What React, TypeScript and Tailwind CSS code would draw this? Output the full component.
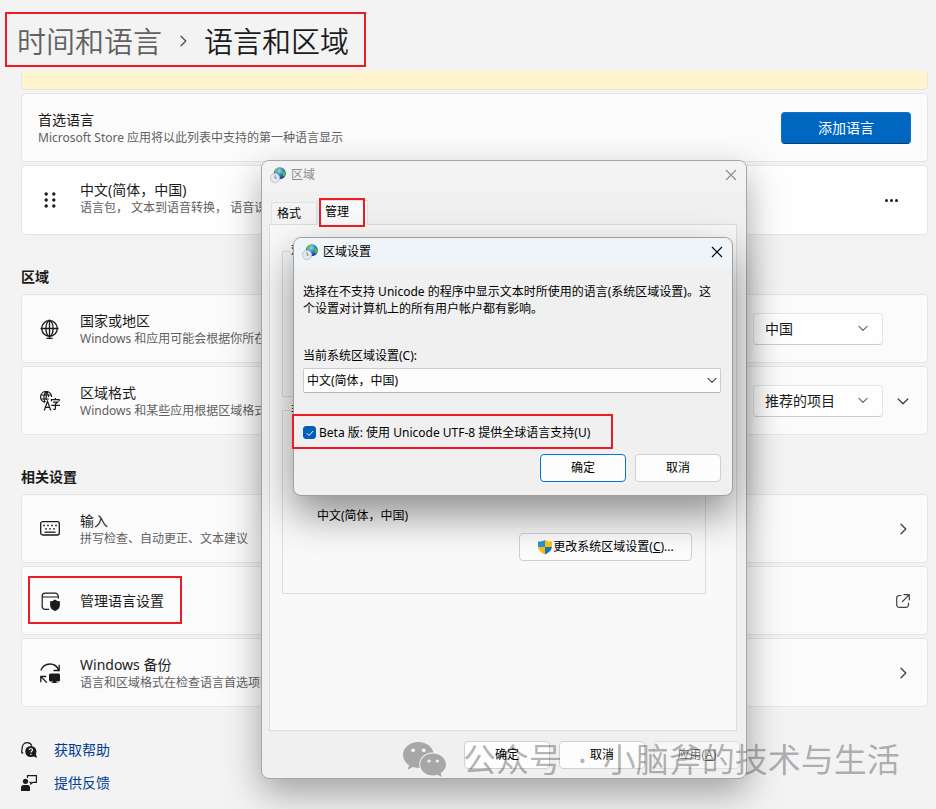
import React, { useState } from 'react';
import { FaWeixin } from 'react-icons/fa';

interface SettingCardProps {
  icon?: React.ReactNode;
  title: string;
  description?: string;
  tall?: boolean;
  highlighted?: boolean;
  children?: React.ReactNode;
}

const SettingCard: React.FC<SettingCardProps> = ({ icon, title, description, tall, highlighted, children }) => (
  <div
    className={`relative flex items-center rounded-[4px] border border-[#e5e5e5] px-4 ${
      tall ? 'h-[70px] bg-[#fefefe]' : 'h-[69px] bg-[#fbfbfb]'
    }`}
  >
    {icon && <div className="mr-[18px] flex w-6 shrink-0 justify-center text-[#1b1b1b]">{icon}</div>}
    <div className={`min-w-0 flex-1 whitespace-nowrap ${tall ? 'pb-1' : ''}`}>
      <div className="text-sm leading-5 text-[#1b1b1b]">{title}</div>
      {description && <div className="text-xs leading-4 text-[#616161]">{description}</div>}
    </div>
    {children}
    {highlighted && <div className="absolute top-[9px] left-[6px] h-12 w-[154px] border-2 border-[#ed1c24]" />}
  </div>
);

const SectionTitle = ({ children }: { children: React.ReactNode }) => (
  <h2 className="pt-8 pb-[7px] text-sm leading-5 font-semibold text-[#1b1b1b]">{children}</h2>
);

const Chevron = ({ direction, className }: { direction: 'right' | 'down'; className: string }) => (
  <svg viewBox="0 0 12 12" className={className} fill="none" stroke="currentColor" strokeWidth="1.300" strokeLinecap="round" strokeLinejoin="round">
    <path d={direction === 'right' ? 'M4 1.2 8.8 6 4 10.8' : 'M1.2 4 6 8.8 10.8 4'} />
  </svg>
);

const SettingSelect = ({ label, value }: { label: string; value: string }) => (
  <div className="relative">
    <select
      aria-label={label}
      className="h-8 w-[130px] appearance-none rounded-[4px] border border-[#e5e5e5] border-b-[#cccccc] bg-[#fefefe] pl-[11px] text-sm text-[#1b1b1b]"
    >
      <option>{value}</option>
    </select>
    <Chevron direction="down" className="pointer-events-none absolute top-[10px] right-[15px] size-[10px] text-[#606060]" />
  </div>
);

const DragIcon = () => (
  <svg viewBox="0 0 20 20" className="size-5" fill="currentColor">
    {[4, 10, 16].map((y) => (
      <React.Fragment key={y}>
        <circle cx="6.2" cy={y} r="1.7" />
        <circle cx="13.8" cy={y} r="1.7" />
      </React.Fragment>
    ))}
  </svg>
);

const GlobeIcon = () => (
  <svg viewBox="0 0 20 20" className="size-5" fill="none" stroke="currentColor" strokeWidth="1.3">
    <circle cx="9.5" cy="9.500" r="7.800" />
    <ellipse cx="9.5" cy="9.500" rx="3.6" ry="7.800" />
    <path d="M.5 9.500h18M9.5 .5v19M6.5 19.300h6" />
  </svg>
);

const RegionFormatIcon = () => (
  <svg viewBox="0 0 20 20" className="size-5" fill="none" stroke="currentColor" strokeWidth="1.2">
    <path d="M5 11.300A5.500 5.500 0 1 1 11.600 6M6.200.6C4.600 1.800 3.900 3.600 3.900 6s.5 3.800 1.400 5M6.200.6c1.600 1.200 2.400 3 2.400 5.400M1.200 4h10M1.200 8h7.600M6.200.6v8.400" />
    <path d="m4.200 19.500 3.300-9.200 3.300 9.200M5.300 16.400h4.400" />
    <path d="M11.400 10.200V8.600h7.800v1.600M15.300 7v1.500M13 11.200h4.600l-2.200 1.900v4.300c0 .8-.4 1-1 1h-1.200M11.300 14.400h8.600" />
  </svg>
);

const KeyboardIcon = () => (
  <svg viewBox="0 0 20 20" className="size-5" fill="none" stroke="currentColor" strokeWidth="1.3">
    <rect x=".7" y="2.600" width="18.600" height="13.400" rx="2" />
    <path d="M4.500 13.200h11" />
    <g fill="currentColor" stroke="none">
      <circle cx="4" cy="6.400" r=".9" />
      <circle cx="8" cy="6.400" r=".9" />
      <circle cx="12" cy="6.400" r=".9" />
      <circle cx="16" cy="6.400" r=".9" />
      <circle cx="6" cy="9.800" r=".9" />
      <circle cx="10" cy="9.800" r=".9" />
      <circle cx="14" cy="9.800" r=".9" />
    </g>
  </svg>
);

const WindowShieldIcon = () => (
  <svg viewBox="0 0 20 20" className="size-5" fill="none" stroke="currentColor" strokeWidth="1.200">
    <path d="M9 18.400H5.200a3 3 0 0 1-3-3V5.200a3 3 0 0 1 3-3h10.100a3 3 0 0 1 3 3V7.500M2.200 6h16.100" />
    <path
      d="M15 8.400c1.500 1.300 3.100 1.800 4.900 1.900v3.600c0 3-1.800 4.900-4.900 6.100-3.100-1.200-4.900-3.100-4.900-6.100v-3.600c1.800-.1 3.400-.6 4.900-1.900Z"
      fill="currentColor"
      stroke="none"
    />
  </svg>
);

const BackupIcon = () => (
  <svg viewBox="0 0 20 20" className="size-5" fill="none" stroke="currentColor" strokeWidth="1.300">
    <path d="M.8 7.500C2.500 3.200 6 1 10 1c3.700 0 7 2 8.700 6M19.200 1.800v5.700h-5.700M.8 19.200v-5.700h5.400M.9 13.600l6 6" />
    <path d="M10.500 10.500h8a1.500 1.500 0 0 1 1.500 1.500v5a1.500 1.500 0 0 1-1.500 1.500H16v.7h1.500v.8h-6v-.8H13v-.7h-2.500A1.500 1.500 0 0 1 9 17v-5a1.500 1.500 0 0 1 1.500-1.500Z" fill="currentColor" stroke="none" />
  </svg>
);

const OpenIcon = () => (
  <svg viewBox="0 0 16 16" className="size-4 text-[#404040]" fill="none" stroke="currentColor" strokeWidth="1.200" strokeLinecap="round" strokeLinejoin="round">
    <path d="M6 2.500H4.200a2.500 2.500 0 0 0-2.500 2.500v6.800a2.500 2.500 0 0 0 2.500 2.500H11a2.500 2.500 0 0 0 2.500-2.500V10M9 1.700h5.300V7M14.100 1.900 7.500 8.500" />
  </svg>
);

const HelpIcon = () => (
  <svg viewBox="0 0 16 16" className="size-4" fill="none" stroke="currentColor">
    <path d="M1.200 7.500C.8 3.200 2.800.7 6 .7c2.400 0 4 1 4.800 3M.8 7.500v3.300h1.500" strokeWidth="1.200" />
    <circle cx="9.800" cy="9.500" r="5.600" fill="currentColor" stroke="none" />
    <path d="m12 14 4 2-1.200-4.500Z" fill="currentColor" stroke="none" />
    <path d="M8.300 8c0-2 3.200-2 3.200 0 0 1.200-1.600 1.200-1.600 2.500M9.900 11.700v1.200" stroke="#f3f3f3" strokeWidth="1.200" />
  </svg>
);

const FeedbackIcon = () => (
  <svg viewBox="0 0 16 16" className="size-4" fill="currentColor">
    <circle cx="4.500" cy="6.300" r="2.600" />
    <path d="M0 16v-3.200C0 11 1 10 2.600 10h4C8.200 10 9 11 9 12.800V16Z" />
    <path d="M6.500 3V.6h8.900v6.700h-3.600L9.900 9V7.300h-1.400" fill="none" stroke="currentColor" strokeWidth="1.200" />
  </svg>
);

const GlobeClockIcon = () => (
  <svg viewBox="0 0 16 16" className="size-4">
    <defs>
      <radialGradient id="globe" cx="0.45" cy="0.3" r="0.75">
        <stop offset="0" stopColor="#9bdcf7" />
        <stop offset="0.45" stopColor="#2f7fd6" />
        <stop offset="1" stopColor="#10277e" />
      </radialGradient>
    </defs>
    <circle cx="9.800" cy="6.200" r="6" fill="url(#globe)" />
    <path d="M5 3.500C6 1.500 8 .6 9.600.8 9.400 2 8 2 8.400 3.400 7.400 4 7.400 5.500 5.800 6 4.800 5.600 4.500 4.500 5 3.500Z" fill="#62c455" />
    <path d="M11.800 4.600c1.500-.8 2.700-.2 3.500.4.500 1.600 0 3.300-1 4.600-1.500.2-1.400-1.500-2-2.400s-1.300-1.700-.5-2.600Z" fill="#4db848" />
    <circle cx="5" cy="11" r="4.700" fill="#e3e9ee" stroke="#aab4bc" strokeWidth=".7" />
    <path d="M5 8v3.200l2-.4" fill="none" stroke="#6d7880" strokeWidth=".8" />
  </svg>
);

const ShieldIcon = () => (
  <svg viewBox="0 0 16 16" className="size-4">
    <path d="M8 1C6 2.200 3.500 2.700 1 2.700V8h7Z" fill="#2196d8" />
    <path d="M8 1c2 1.200 4.500 1.700 7 1.700V8H8Z" fill="#fdc60b" />
    <path d="M1 8c.3 3.200 3 5.700 7 7.400V8Z" fill="#fdb913" />
    <path d="M15 8c-.3 3.200-3 5.700-7 7.400V8Z" fill="#1973be" />
  </svg>
);

const CloseIcon = () => (
  <svg viewBox="0 0 12 12" className="size-3" fill="none" stroke="currentColor" strokeWidth="1.100">
    <path d="m1 1 10 10M11 1 1 11" />
  </svg>
);

const DialogButton = ({ primary, disabled, children }: { primary?: boolean; disabled?: boolean; children: React.ReactNode }) => (
  <button
    disabled={disabled}
    className={`h-7 w-[86px] rounded-[4px] border bg-[#fdfdfd] ${
      primary ? 'border-[#0078d4]' : 'border-[#d0d0d0]'
    } ${disabled ? 'opacity-50' : ''}`}
  >
    {children}
  </button>
);

const RegionWindow = () => (
  <section className="absolute top-[160px] left-[261px] w-[486px] overflow-hidden rounded-lg border border-[#a6a6a6] bg-[#f0f0f0] text-xs text-black shadow-[0_14px_36px_rgba(0,0,0,0.34)]">
    <div className="flex h-[30px] items-center bg-[#f3f3f3] pr-[9px] pb-[2px] pl-2 text-[#8b8b8b]">
      <GlobeClockIcon />
      <span className="ml-[5px] flex-1">区域</span>
      <button aria-label="关闭"><CloseIcon /></button>
    </div>
    <div className="pt-[9px] pr-[9px] pl-[7px]">
      <div className="flex items-end pl-[2px]" role="tablist">
        <button role="tab" className="h-[22px] w-[46px] border border-b-0 border-[#e2e2e2] bg-[#f3f3f3] pr-[10px]">格式</button>
        <button role="tab" className="relative -mb-px h-[25px] w-[51px] border border-b-0 border-[#e2e2e2] bg-[#f9f9f9] pr-[11px] pb-[2px] text-center">
          管理
          <span className="absolute -top-[3px] left-px h-[29px] w-[46px] border-2 border-[#ed1c24]" />
        </button>
      </div>
      <div className="h-[507px] border border-[#dcdcdc] bg-[#f9f9f9] pt-[18px] pr-[30px] pl-3">
        <fieldset className="h-[154px] border border-[#dcdcdc] pl-[7px]">
          <legend className="px-px leading-4">欢</legend>
        </fieldset>
        <fieldset className="mt-[5px] h-[192px] border border-[#dcdcdc] pr-[13px] pl-[7px]">
          <legend className="px-px leading-4">非</legend>
          <p className="mt-[90px] pl-[27px] leading-4">中文(简体，中国)</p>
          <div className="mt-[9px] flex justify-end">
            <button className="flex h-7 w-[173px] items-center justify-center whitespace-nowrap rounded-[4px] border border-[#d0d0d0] bg-[#fdfdfd]">
              <ShieldIcon />
              <span>更改系统区域设置(<u>C</u>)...</span>
            </button>
          </div>
        </fieldset>
      </div>
    </div>
    <div className="flex justify-end gap-[9px] pt-[10px] pr-[6px] pb-[9px]">
      <DialogButton>确定</DialogButton>
      <DialogButton>取消</DialogButton>
      <DialogButton disabled>应用(<u>A</u>)</DialogButton>
    </div>
  </section>
);

const RegionSettingsDialog = () => {
  const [utf8, setUtf8] = useState(true);

  return (
    <section className="absolute top-[237px] left-[293px] w-[440px] rounded-lg border border-[#a0a0a0] bg-[#f0f0f0] text-xs text-black shadow-[0_18px_40px_rgba(0,0,0,0.44)]">
      <div className="flex h-[29px] items-center rounded-t-lg bg-[#eff4f9] pr-[9px] pb-[2px] pl-2">
        <GlobeClockIcon />
        <span className="ml-[5px] flex-1">区域设置</span>
        <button aria-label="关闭"><CloseIcon /></button>
      </div>
      <div className="pt-4 pr-[11px] pb-[13px] pl-[9px]">
        <p className="leading-[17px] whitespace-nowrap">
          选择在不支持 Unicode 的程序中显示文本时所使用的语言(系统区域设置)。这
          <br />
          个设置对计算机上的所有用户帐户都有影响。
        </p>
        <label htmlFor="locale" className="mt-[31px] block leading-4">当前系统区域设置(C):</label>
        <div className="relative mt-1">
          <select id="locale" className="block h-[25px] w-full appearance-none rounded-[2px] border border-[#cccccc] border-b-[#b5b5b5] bg-[#fdfdfd] pl-[3px]">
            <option>中文(简体，中国)</option>
          </select>
          <Chevron direction="down" className="pointer-events-none absolute top-[7px] right-1 size-[10px] text-[#404040]" />
        </div>
        <label className="mt-[21px] -ml-[11px] flex h-[35px] w-[321px] items-center border-2 border-[#ed1c24] pt-[2px] pl-[9px] whitespace-nowrap">
          <input type="checkbox" checked={utf8} onChange={(e) => setUtf8(e.target.checked)} className="peer sr-only" />
          <span className="mr-[3px] flex size-[13px] items-center justify-center rounded-[3px] border border-[#868686] bg-white text-white peer-checked:border-[#005fb8] peer-checked:bg-[#005fb8]">
            <svg viewBox="0 0 12 12" className="size-[10px]" fill="none" stroke="currentColor" strokeWidth="1.200">
              <path d="m2 6.200 2.800 2.800L10 3.500" />
            </svg>
          </span>
          Beta 版: 使用 Unicode UTF-8 提供全球语言支持(U)
        </label>
        <div className="mt-[5px] flex justify-end gap-[9px]">
          <DialogButton primary>确定</DialogButton>
          <DialogButton>取消</DialogButton>
        </div>
      </div>
    </section>
  );
};

const App: React.FC = () => {
  return (
    <div className="relative min-h-screen overflow-hidden bg-[#f3f3f3] font-['Noto_Sans','Noto_Sans_CJK_SC',sans-serif]">
      <header className="pt-3 pb-1 pl-[5px]">
        <h1 className="flex h-[55px] w-[361px] items-center border-2 border-[#ed1c24] pt-[3px] pl-[10px] text-[29px] leading-none font-[350] whitespace-nowrap text-[#1b1b1b]">
          <span className="text-[#616161]">时间和语言</span>
          <Chevron direction="right" className="mx-[15px] size-3 text-[#505050]" />
          <span>语言和区域</span>
        </h1>
      </header>

      <main className="pr-2 pl-[21px]">
        <div className="h-[19px] rounded-b-[4px] border border-t-0 border-[#e5e5e5] bg-[#fff4ce]" />
        <div className="mt-[3px] flex flex-col gap-[3px]">
          <SettingCard title="首选语言" description="Microsoft Store 应用将以此列表中支持的第一种语言显示">
            <button className="h-8 w-[130px] rounded-[4px] border border-[#1470c6] border-b-[#003e73] bg-[#0067c0] text-sm text-white">
              添加语言
            </button>
          </SettingCard>
          <SettingCard tall icon={<DragIcon />} title="中文(简体，中国)" description="语言包， 文本到语音转换， 语音识别">
            <button aria-label="更多选项" className="flex h-8 w-10 items-center justify-center gap-[2px]">
              <span className="size-[3px] rounded-full bg-[#1b1b1b]" />
              <span className="size-[3px] rounded-full bg-[#1b1b1b]" />
              <span className="size-[3px] rounded-full bg-[#1b1b1b]" />
            </button>
          </SettingCard>
        </div>

        <SectionTitle>区域</SectionTitle>
        <div className="flex flex-col gap-[3px]">
          <SettingCard icon={<GlobeIcon />} title="国家或地区" description="Windows 和应用可能会根据你所在">
            <SettingSelect label="国家或地区" value="中国" />
            <div className="ml-3 w-4" />
          </SettingCard>
          <SettingCard icon={<RegionFormatIcon />} title="区域格式" description="Windows 和某些应用根据区域格式">
            <SettingSelect label="区域格式" value="推荐的项目" />
            <div className="ml-3 flex w-4 justify-center">
              <Chevron direction="down" className="size-3 text-[#404040]" />
            </div>
          </SettingCard>
        </div>

        <SectionTitle>相关设置</SectionTitle>
        <div className="flex flex-col gap-[3px]">
          <SettingCard icon={<KeyboardIcon />} title="输入" description="拼写检查、自动更正、文本建议">
            <div className="flex w-4 justify-center">
              <Chevron direction="right" className="size-3 text-[#404040]" />
            </div>
          </SettingCard>
          <SettingCard icon={<WindowShieldIcon />} title="管理语言设置" highlighted>
            <OpenIcon />
          </SettingCard>
          <SettingCard icon={<BackupIcon />} title="Windows 备份" description="语言和区域格式在检查语言首选项时">
            <div className="flex w-4 justify-center">
              <Chevron direction="right" className="size-3 text-[#404040]" />
            </div>
          </SettingCard>
        </div>

        <nav className="flex flex-col items-start gap-[13px] pt-[33px] pb-4 text-sm leading-5 text-[#003e92]">
          <a href="#help" className="flex items-center gap-[17px]">
            <span className="text-[#1b1b1b]"><HelpIcon /></span>
            获取帮助
          </a>
          <a href="#feedback" className="flex items-center gap-[17px]">
            <span className="text-[#1b1b1b]"><FeedbackIcon /></span>
            提供反馈
          </a>
        </nav>
      </main>

      <RegionWindow />
      <RegionSettingsDialog />

      <div className="pointer-events-none absolute top-[737px] left-[402px] flex items-center text-[33px] leading-[44px] whitespace-nowrap text-black/30">
        <FaWeixin className="mr-4 size-[45px]" />
        <span>公众号</span>
        <span className="mx-4">·</span>
        <span>小脑斧的技术与生活</span>
      </div>
    </div>
  );
};

export default App;
